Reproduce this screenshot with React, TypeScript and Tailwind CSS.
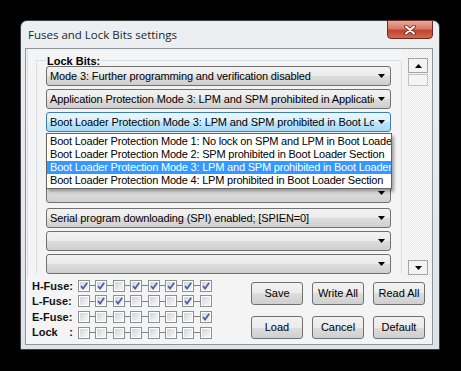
import React from 'react';

type Row = { text: string; focus?: boolean };

const rows: Row[] = [
  { text: 'Mode 3: Further programming and verification disabled' },
  { text: 'Application Protection Mode 3: LPM and SPM prohibited in Application Section' },
  { text: 'Boot Loader Protection Mode 3: LPM and SPM prohibited in Boot Loader Section', focus: true },
  { text: '' },
  { text: '' },
  { text: '' },
  { text: 'Serial program downloading (SPI) enabled; [SPIEN=0]' },
  { text: '' },
  { text: '' },
];

const options = [
  'Boot Loader Protection Mode 1: No lock on SPM and LPM in Boot Loader Section',
  'Boot Loader Protection Mode 2: SPM prohibited in Boot Loader Section',
  'Boot Loader Protection Mode 3: LPM and SPM prohibited in Boot Loader Section',
  'Boot Loader Protection Mode 4: LPM prohibited in Boot Loader Section',
];

const fuses: { label: string; bits: boolean[] }[] = [
  { label: 'H-Fuse:', bits: [true, true, false, true, true, true, true, true] },
  { label: 'L-Fuse:', bits: [false, true, true, false, false, false, true, false] },
  { label: 'E-Fuse:', bits: [false, false, false, false, false, false, false, true] },
  { label: 'Lock', bits: [false, false, false, false, false, false, false, false] },
];

function Arrow() {
  return (
    <svg width="7" height="4" viewBox="0 0 7 4">
      <path d="M0 0 H7 L3.5 4 Z" fill="#000" />
    </svg>
  );
}

function Combo({ row, open }: { row: Row; open?: boolean }) {
  return (
    <div
      className={
        row.focus
          ? 'relative h-[20px] rounded-[3px] border border-[#3c7fb1] bg-[linear-gradient(180deg,#eaf6fd_0%,#d9f0fc_50%,#bee6fd_50%,#a7d9f5_100%)] flex items-center'
          : 'relative h-[20px] rounded-[3px] border border-[#707070] bg-[linear-gradient(180deg,#f2f2f2_0%,#ebebeb_50%,#dddddd_50%,#cfcfcf_100%)] flex items-center'
      }
    >
      <div className="flex-1 overflow-hidden whitespace-nowrap pl-[3px] tracking-[-0.12px]">{row.text}</div>
      <div className="w-[16px] flex justify-center pr-[2px]">
        <Arrow />
      </div>
      {open && (
        <div className="absolute left-[-1px] top-[20px] z-10 w-[346px] border border-[#646464] bg-white py-[1px] shadow-[2px_3px_3px_rgba(0,0,0,0.35)]">
          {options.map((o, i) => (
            <div
              key={i}
              className={
                i === 2
                  ? 'h-[13px] leading-[13px] pl-[3px] whitespace-nowrap overflow-hidden tracking-[-0.2px] bg-[#3399ff] text-white'
                  : 'h-[13px] leading-[13px] pl-[3px] whitespace-nowrap overflow-hidden tracking-[-0.2px]'
              }
            >
              {o}
            </div>
          ))}
        </div>
      )}
    </div>
  );
}

function Check({ on }: { on: boolean }) {
  return (
    <span className="relative w-[12px] h-[12px] border border-[#8e8f8f] bg-white shrink-0">
      <span className="absolute inset-[1px] bg-[linear-gradient(135deg,#d2d5d9,#f7f7f7)]" />
      {on && (
        <svg className="absolute left-0 top-0" width="10" height="10" viewBox="0 0 10 10">
          <path d="M2 5 L4.1 7.6 L8.2 1.8" stroke="#4b5ea8" strokeWidth="1.7" fill="none" />
        </svg>
      )}
    </span>
  );
}

function Btn({ children }: { children: React.ReactNode }) {
  return (
    <div className="w-[52px] h-[23px] rounded-[3px] border border-[#707070] bg-[linear-gradient(180deg,#f2f2f2_0%,#ebebeb_50%,#dddddd_50%,#cfcfcf_100%)] flex items-center justify-center">
      {children}
    </div>
  );
}

function ScrollBtn({ up }: { up?: boolean }) {
  return (
    <div className="ml-[4px] w-[20px] h-[15px] border border-[#a4a4a4] bg-[#f3f3f3] flex items-center justify-center">
      <svg width="7" height="4" viewBox="0 0 7 4">
        {up ? <path d="M0 4 H7 L3.5 0 Z" fill="#000" /> : <path d="M0 0 H7 L3.5 4 Z" fill="#000" />}
      </svg>
    </div>
  );
}

export default function App() {
  return (
    <div className="w-[461px] h-[371px] bg-black pt-[20px] pl-[20px] font-['Liberation_Sans',Arial,sans-serif] text-[11px] text-black">
      <div className="relative w-[420px] h-[330px] rounded-t-[7px] border border-[#3b3f44] bg-[linear-gradient(180deg,#eceff2,#dfe3e8)] flex flex-col">
        <div className="h-[27px] flex items-center pl-[7px] font-['Open_Sans',sans-serif] text-[11.5px] text-[#1e1e1e]">
          Fuses and Lock Bits settings
        </div>
        {/* close button */}
        <div className="absolute top-[-1px] right-[6px] w-[46px] h-[19px] rounded-b-[4px] border border-[#6b2a22] bg-[linear-gradient(180deg,#e9a99b_0%,#d77a68_45%,#c2412f_55%,#d26a4d_100%)] flex items-center justify-center">
          <svg width="12" height="10" viewBox="0 0 12 10">
            <path d="M2 1.5 L10 8.5 M10 1.5 L2 8.5" stroke="#5b231b" strokeWidth="3.6" strokeLinecap="round" />
            <path d="M2 1.5 L10 8.5 M10 1.5 L2 8.5" stroke="#ffffff" strokeWidth="2" strokeLinecap="round" />
          </svg>
        </div>

        <div className="ml-[4px] w-[408px] h-[297px] border border-[#8d949c] bg-[#f4f4f4] flex flex-col">
          <div className="h-[229px] flex">
            <div className="w-[377px] relative overflow-hidden border-l border-[#dcdcdc] ml-[1px]">
              <div className="ml-[8px] mt-[11px] w-[366px] relative border-l border-t border-r border-[#d5dfe5] pt-[5px] pl-[9px] pr-[10px]">
                <span className="absolute top-[-8px] left-[9px] px-[1px] bg-[#f4f4f4] font-bold">Lock Bits:</span>
                <div className="flex flex-col gap-[3px]">
                  {rows.map((r, i) => (
                    <div key={i} className={i === 5 || i === 6 ? 'mt-[2px]' : ''}>
                      <Combo row={r} open={!!r.focus} />
                    </div>
                  ))}
                </div>
              </div>
            </div>
            <div className="w-[28px] flex flex-col bg-[repeating-conic-gradient(#ffffff_0_25%,#e6e6e6_0_50%)] bg-[length:2px_2px]">
              <div className="mt-[9px]">
                <ScrollBtn up />
              </div>
              <div className="ml-[4px] mt-[1px] w-[20px] h-[12px] border border-[#c2c2c2] bg-[#f4f4f4]" />
              <div className="mt-auto mb-[3px]">
                <ScrollBtn />
              </div>
            </div>
          </div>

          <div className="flex-1 flex">
            <div className="pl-[6px] flex flex-col">
              {fuses.map((f, i) => (
                <div key={i} className="h-[15.6px] flex items-center">
                  <span className="w-[46px] font-bold text-[#111]">
                    {f.label === 'Lock' ? (
                      <span className="flex w-[41px] justify-between">
                        <span>Lock</span>
                        <span>:</span>
                      </span>
                    ) : (
                      f.label
                    )}
                  </span>
                  {f.bits.map((b, j) => (
                    <span key={j} className="flex items-center">
                      {j > 0 && <span className="w-[5.4px] h-[1px] bg-[#808080]" />}
                      <Check on={b} />
                    </span>
                  ))}
                </div>
              ))}
            </div>
            <div className="ml-auto pr-[7px] pt-[4px] grid grid-cols-3 gap-x-[9px] gap-y-[11px] h-fit">
              <Btn>Save</Btn>
              <Btn>Write All</Btn>
              <Btn>Read All</Btn>
              <Btn>Load</Btn>
              <Btn>Cancel</Btn>
              <Btn>Default</Btn>
            </div>
          </div>
        </div>
      </div>
    </div>
  );
}
